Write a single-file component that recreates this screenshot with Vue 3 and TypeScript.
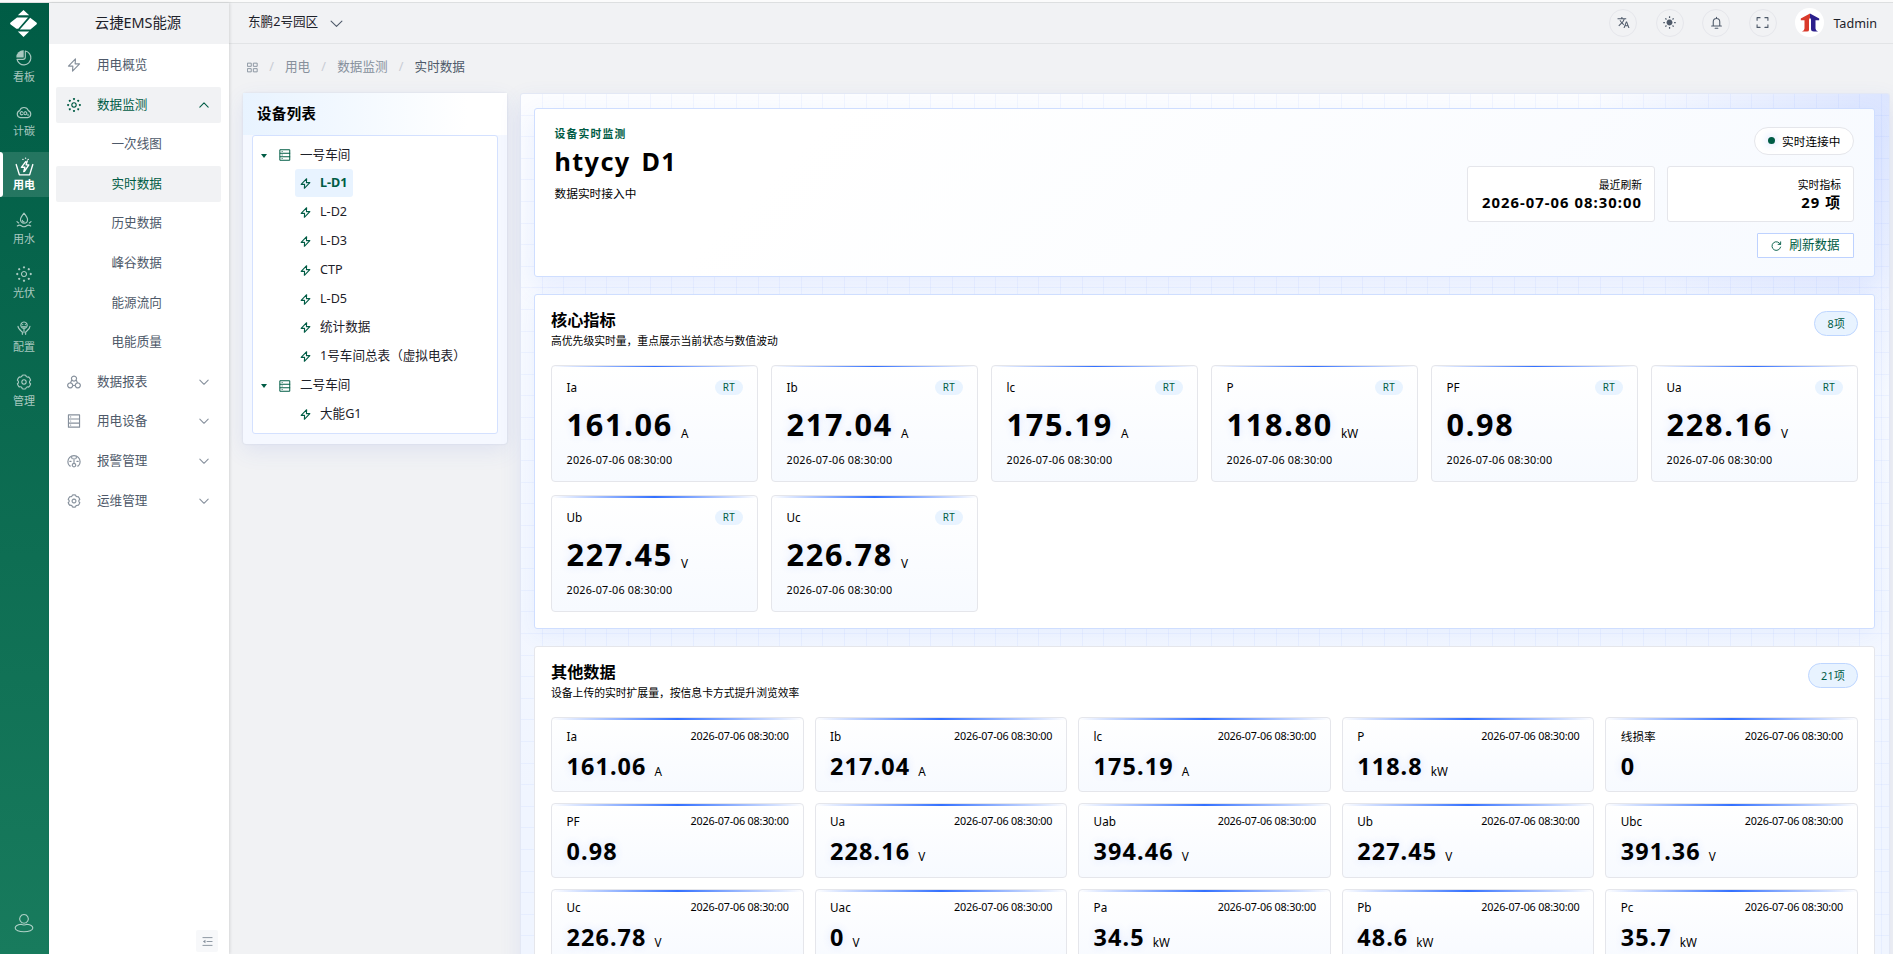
<script setup lang="ts">
interface Glyph { line?: string; fill?: string }
interface Metric { name: string; value: string; unit?: string }
interface MenuRow { label: string; icon?: string; arrow?: 'up' | 'down'; active?: boolean; open?: boolean }
interface TreeRow { label: string; group?: boolean; active?: boolean }

const glyphs: Record<string, Glyph> = {
  board: { line: 'M14 1.500A10.500 10.500 0 1 1 1.500 14H10.500a3.500 3.500 0 0 0 3.500-3.500z', fill: 'M11.500 .5v10.700H.5A10.500 10.500 0 0 1 11.500 .5z' },
  carbon: { line: 'M6.500 20.500a5.500 5.500 0 0 1-1-10.600 6.900 6.900 0 0 1 13 0 5.500 5.500 0 0 1-1 10.600zM10 12.200a2.200 2.200 0 1 0 0 3.300M14 11.700a2.200 2.200 0 1 0 .01 0M18 15.500v1.600' },
  power: { line: 'M1.500 9.500l4 13h13l4-13M13.500 6L8 13h4.500L11 18.500M15.500 5L14 10h3.500l-5.500 8M10 3h.1M13.300 1.500h.1M16.600 3h.1' },
  water: { line: 'M12 1.800c3 3.800 5.300 6.600 5.300 9.700a5.300 5.300 0 0 1-10.600 0C6.700 8.400 9 5.600 12 1.800zM9.500 12.500a2.600 2.600 0 0 0 2.500 2.300M1.500 14.500l2.500 2M22.500 14.500L20 16.500M2 21c2.300-1.800 4.400-1.800 6.500 0 2.300 1.600 4.500 1.600 7 0 1.900-1.800 4.200-1.800 6.500 0' },
  solar: { line: 'M12 8.200a3.800 3.800 0 1 0 .01 0z', fill: 'M12 .2a1.700 1.700 0 1 0 .01 0zM12 20.400a1.700 1.700 0 1 0 .01 0zM1.900 10.300a1.700 1.700 0 1 0 .01 0zM22.100 10.300a1.700 1.700 0 1 0 .01 0zM4.800 3.100a1.700 1.700 0 1 0 .01 0zM19.200 3.100a1.700 1.700 0 1 0 .01 0zM4.800 17.500a1.700 1.700 0 1 0 .01 0zM19.200 17.500a1.700 1.700 0 1 0 .01 0z' },
  config: { line: 'M12 3a4.800 4.800 0 1 0 .01 0zM10 6.800h.1M14 6.800h.1M10 9.500q2 1.500 4 0M3 9.500c0 4 3.500 6 6.500 8.500v3.500M21 9.500c0 4-3.500 6-6.500 8.500v3.500M12 13v6' },
  gear: { line: 'M9.300 1.800a10.500 10.500 0 0 1 5.400 0 3 3 0 0 0 4.400 2.600 10.500 10.500 0 0 1 2.800 4.900 3 3 0 0 0 0 5.400 10.500 10.500 0 0 1-2.900 4.900 3 3 0 0 0-4.400 2.600 10.500 10.500 0 0 1-5.300 0 3 3 0 0 0-4.400-2.700 10.500 10.500 0 0 1-2.800-4.800 3 3 0 0 0 0-5.400 10.500 10.500 0 0 1 2.900-4.900 3 3 0 0 0 4.300-2.600zM12 8.700a3.300 3.300 0 1 0 .01 0z' },
  bolt: { line: 'M14.500 1.500L2.500 14h7.500L9.500 22.500 21.500 10h-7.500z' },
  report: { line: 'M12 1.800a4.300 4.300 0 1 0 .01 0zM5.500 13.500a4.300 4.300 0 1 0 .01 0zM18.500 13.500a4.300 4.300 0 1 0 .01 0zM8.200 8.500L6.300 13M15.800 8.500l1.900 4.500M10.500 18h3' },
  device: { line: 'M2.500 1.500h19v21h-19zM2.500 8.500h19M2.500 15.500h19M6.200 5h.1M6.200 12h.1M6.200 19h.1' },
  alarm: { line: 'M6 20.500H4.500a10.500 10.500 0 1 1 15 0H18M12 7.500v8M12 16a3 3 0 1 0 .01 0M4.800 12.500h2.200M17 12.500h2.200M8 6l1 2M16 6l-1 2' },
  user: { line: 'M12 1.800a5.200 5.200 0 1 0 .01 0zM8.500 13.400C4.200 14 1.400 15.800 1.400 18c0 2.600 4.700 4.500 10.600 4.500s10.600-1.900 10.600-4.500c0-2.200-2.800-4-7.100-4.600-2.300 1.200-4.700 1.200-7 0z' },
  down: { line: 'M2 7.500l10 10 10-10' },
  up: { line: 'M2 17l10-10 10 10' },
  grid: { line: 'M1.800 2.500h7.500v7h-7.500zM14.700 2.500h7.500v7h-7.500zM1.800 14.500h7.500v7h-7.500zM14.700 14.500h7.500v7h-7.500z' },
  refresh: { line: 'M21 4v5.500h-5.500M20.500 9.500a9.500 9.500 0 1 0 .5 6' },
  bell: { line: 'M3 18.500h18M6 18.500v-8a6 6 0 0 1 12 0v8M12 4.500V2.500M9.500 22.500h5' },
  full: { line: 'M7.500 3H2v5M16.500 3H22v5M7.500 21H2v-5M16.500 21H22v-5' },
  lang: { fill: 'M12.870 15.070l-2.540-2.510.03-.03A17.520 17.520 0 0 0 14.070 6H17V4h-7V2H8v2H1v2h11.170C11.500 7.920 10.440 9.750 9 11.350 8.070 10.320 7.300 9.190 6.690 8h-2c.73 1.630 1.730 3.170 2.980 4.560l-5.090 5.020L4 19l5-5 3.110 3.110.76-2.040zM18.500 10h-2L12 22h2l1.120-3h4.750L21 22h2l-4.500-12zm-2.620 7l1.620-4.330L19.120 17h-3.240z' },
  sun: { fill: 'M12 6.500a5.500 5.500 0 1 0 .01 0zM11 .5h2.200v3H11zM11 20.500h2.200v3H11zM.5 11h3v2.200h-3zM20.500 11h3v2.200h-3zM3.600 5.200l1.600-1.600 2 2-1.600 1.600zM16.800 18.400l1.600-1.600 2 2-1.600 1.600zM3.600 18.800l2-2 1.600 1.600-2 2zM16.800 5.600l2-2 1.600 1.600-2 2z' },
  fold: { line: 'M2 3.500h20M11 12h11M2 20.500h20', fill: 'M7.500 8v8L2 12z' },
}

const rail = [
  { label: '看板', icon: 'board' },
  { label: '计碳', icon: 'carbon' },
  { label: '用电', icon: 'power', active: true },
  { label: '用水', icon: 'water' },
  { label: '光伏', icon: 'solar' },
  { label: '配置', icon: 'config' },
  { label: '管理', icon: 'gear' },
]

const menu: MenuRow[] = [
  { label: '用电概览', icon: 'bolt' },
  { label: '数据监测', icon: 'solar', arrow: 'up', open: true },
  { label: '一次线图' },
  { label: '实时数据', active: true },
  { label: '历史数据' },
  { label: '峰谷数据' },
  { label: '能源流向' },
  { label: '电能质量' },
  { label: '数据报表', icon: 'report', arrow: 'down' },
  { label: '用电设备', icon: 'device', arrow: 'down' },
  { label: '报警管理', icon: 'alarm', arrow: 'down' },
  { label: '运维管理', icon: 'gear', arrow: 'down' },
]

const tree: TreeRow[] = [
  { label: '一号车间', group: true },
  { label: 'L-D1', active: true },
  { label: 'L-D2' },
  { label: 'L-D3' },
  { label: 'CTP' },
  { label: 'L-D5' },
  { label: '统计数据' },
  { label: '1号车间总表（虚拟电表）' },
  { label: '二号车间', group: true },
  { label: '大能G1' },
]

const stamp = '2026-07-06 08:30:00'
const crumbs = ['用电', '数据监测', '实时数据']
const tools = ['lang', 'sun', 'bell', 'full']

const core: Metric[] = [
  { name: 'Ia', value: '161.06', unit: 'A' },
  { name: 'Ib', value: '217.04', unit: 'A' },
  { name: 'lc', value: '175.19', unit: 'A' },
  { name: 'P', value: '118.80', unit: 'kW' },
  { name: 'PF', value: '0.98' },
  { name: 'Ua', value: '228.16', unit: 'V' },
  { name: 'Ub', value: '227.45', unit: 'V' },
  { name: 'Uc', value: '226.78', unit: 'V' },
]

const others: Metric[] = [
  { name: 'Ia', value: '161.06', unit: 'A' },
  { name: 'Ib', value: '217.04', unit: 'A' },
  { name: 'lc', value: '175.19', unit: 'A' },
  { name: 'P', value: '118.8', unit: 'kW' },
  { name: '线损率', value: '0' },
  { name: 'PF', value: '0.98' },
  { name: 'Ua', value: '228.16', unit: 'V' },
  { name: 'Uab', value: '394.46', unit: 'V' },
  { name: 'Ub', value: '227.45', unit: 'V' },
  { name: 'Ubc', value: '391.36', unit: 'V' },
  { name: 'Uc', value: '226.78', unit: 'V' },
  { name: 'Uac', value: '0', unit: 'V' },
  { name: 'Pa', value: '34.5', unit: 'kW' },
  { name: 'Pb', value: '48.6', unit: 'kW' },
  { name: 'Pc', value: '35.7', unit: 'kW' },
]
</script>

<template>
  <div class="app">
    <nav class="rail">
      <svg class="logo" viewBox="0 0 27 27">
        <path d="M13.500 0L19.200 5.300H7.800zM13.500 27L7.800 21.400h11.400z" />
        <path d="M7 7.500h11L8.300 18.700H6.400L.6 14.400Q-.4 13.500.6 12.600zM20.200 7.700l6.200 4.900q1 .9 0 1.800l-6 5.200H9.800z" />
      </svg>
      <div class="rail-list">
        <div v-for="r in rail" :key="r.label" class="rail-item" :class="{ on: r.active }">
          <svg class="ico rail-ico" viewBox="0 0 24 24">
            <path v-if="glyphs[r.icon].line" class="ln" :d="glyphs[r.icon].line" />
            <path v-if="glyphs[r.icon].fill" class="fl" :d="glyphs[r.icon].fill" />
          </svg>
          <span>{{ r.label }}</span>
        </div>
      </div>
      <svg class="ico rail-user" viewBox="0 0 24 24"><path class="ln" :d="glyphs.user.line" /></svg>
    </nav>

    <aside class="side">
      <div class="brand">云捷EMS能源</div>
      <div class="menu">
        <div
          v-for="m in menu"
          :key="m.label"
          class="menu-row"
          :class="{ sub: !m.icon, on: m.active || m.open }"
        >
          <svg v-if="m.icon" class="ico menu-ico" viewBox="0 0 24 24">
            <path v-if="glyphs[m.icon].line" class="ln" :d="glyphs[m.icon].line" />
            <path v-if="glyphs[m.icon].fill" class="fl" :d="glyphs[m.icon].fill" />
          </svg>
          <span class="menu-label">{{ m.label }}</span>
          <svg v-if="m.arrow" class="ico arrow" viewBox="0 0 24 24"><path class="ln" :d="glyphs[m.arrow].line" /></svg>
        </div>
      </div>
      <div class="fold">
        <svg class="ico" viewBox="0 0 24 24">
          <path class="ln" :d="glyphs.fold.line" /><path class="fl" :d="glyphs.fold.fill" />
        </svg>
      </div>
    </aside>

    <div class="page">
      <header class="top">
        <span class="park">东鹏2号园区</span>
        <svg class="ico park-arrow" viewBox="0 0 24 24"><path class="ln" :d="glyphs.down.line" /></svg>
        <div class="tools">
          <span v-for="t in tools" :key="t" class="tool">
            <svg class="ico" viewBox="0 0 24 24">
              <path v-if="glyphs[t].line" class="ln" :d="glyphs[t].line" />
              <path v-if="glyphs[t].fill" class="fl" :d="glyphs[t].fill" />
            </svg>
          </span>
          <span class="avatar">
            <svg viewBox="0 0 20 20">
              <path class="red" d="M10 .5v4.300L9 6.500V17q0 1.500-2 1.500H2q2.500-1 2.500-3V7.200H.8V5.500z" />
              <path class="blue" d="M10 .5l9.200 5v1.700h-3.700v8.300q0 2 2.500 3h-4q-3 0-3-2.500V6.500L10 4.800z" />
            </svg>
          </span>
          <span class="user">Tadmin</span>
        </div>
      </header>

      <div class="crumbs">
        <svg class="ico" viewBox="0 0 24 24"><path class="ln" :d="glyphs.grid.line" /></svg>
        <template v-for="(c, i) in crumbs" :key="c">
          <i>/</i><span :class="{ last: i === crumbs.length - 1 }">{{ c }}</span>
        </template>
      </div>

      <div class="body">
        <section class="devices">
          <h3>设备列表</h3>
          <div class="tree">
            <div v-for="t in tree" :key="t.label" class="node" :class="{ group: t.group, on: t.active }">
              <i v-if="t.group" class="caret" />
              <span class="node-box">
                <svg class="ico" viewBox="0 0 24 24">
                  <path class="ln" :d="t.group ? glyphs.device.line : glyphs.bolt.line" />
                </svg>
                <span>{{ t.label }}</span>
              </span>
            </div>
          </div>
        </section>

        <main class="board">
          <section class="hero">
            <div class="hero-left">
              <p class="eyebrow">设备实时监测</p>
              <h1>htycy D1</h1>
              <p class="desc">数据实时接入中</p>
            </div>
            <div class="hero-right">
              <span class="live"><i />实时连接中</span>
              <div class="stats">
                <div class="stat"><small>最近刷新</small><strong>{{ stamp }}</strong></div>
                <div class="stat"><small>实时指标</small><strong>29 项</strong></div>
              </div>
              <button class="reload">
                <svg class="ico" viewBox="0 0 24 24"><path class="ln" :d="glyphs.refresh.line" /></svg>刷新数据
              </button>
            </div>
          </section>

          <section class="panel blue-edge">
            <div class="panel-head">
              <div>
                <h2>核心指标</h2>
                <p>高优先级实时量，重点展示当前状态与数值波动</p>
              </div>
              <span class="count">8项</span>
            </div>
            <div class="core-grid">
              <article v-for="(m, i) in core" :key="m.name" class="card core" :class="{ thin: i < 6 }">
                <div class="card-top"><span class="name">{{ m.name }}</span><span class="rt">RT</span></div>
                <div class="value"><b>{{ m.value }}</b><em v-if="m.unit">{{ m.unit }}</em></div>
                <time>{{ stamp }}</time>
              </article>
            </div>
          </section>

          <section class="panel">
            <div class="panel-head">
              <div>
                <h2>其他数据</h2>
                <p>设备上传的实时扩展量，按信息卡方式提升浏览效率</p>
              </div>
              <span class="count">21项</span>
            </div>
            <div class="other-grid">
              <article v-for="m in others" :key="m.name" class="card other">
                <div class="card-top"><span class="name">{{ m.name }}</span><time>{{ stamp }}</time></div>
                <div class="value"><b>{{ m.value }}</b><em v-if="m.unit">{{ m.unit }}</em></div>
              </article>
            </div>
          </section>
        </main>
      </div>
    </div>
  </div>
</template>

<style>
html,
body {
  margin: 0;
  overflow: hidden;
  background: #fff;
}
</style>

<style scoped>
* {
  box-sizing: border-box;
}
h1,
h2,
h3,
p {
  margin: 0;
}
i,
em {
  font-style: normal;
}
.app {
  display: flex;
  height: 954px;
  padding-top: 3px;
  overflow: hidden;
  background: linear-gradient(#fbfbfb 0, #fbfbfb 2px, #dddfe0 2px, #dddfe0 3px, #f1f2f4 3px);
  font-family: "Noto Sans", "Noto Sans CJK SC", sans-serif;
  font-size: 12.6px;
  line-height: 18px;
  color: #1d2129;
}
.ico {
  display: block;
  flex: none;
}
.ln {
  fill: none;
  stroke: currentColor;
  stroke-width: 2;
  stroke-linecap: round;
  stroke-linejoin: round;
}
.fl {
  fill: currentColor;
}

/* green rail */
.rail {
  width: 49px;
  flex: none;
  display: flex;
  flex-direction: column;
  background: linear-gradient(#005c45, #187b5d);
  color: rgba(255, 255, 255, 0.66);
}
.logo {
  width: 27px;
  height: 27px;
  margin: 7px 0 0 10px;
  fill: #fff;
}
.rail-list {
  display: flex;
  flex-direction: column;
  gap: 9px;
  margin-top: 7px;
}
.rail-item {
  height: 45px;
  padding-top: 6px;
  display: flex;
  flex-direction: column;
  align-items: center;
  font-size: 11px;
  line-height: 16px;
}
.rail-item span {
  margin: 3px 1px 0 0;
}
.rail-item.on {
  padding-top: 5px;
  color: #fff;
  font-weight: 700;
  background: rgba(255, 255, 255, 0.13);
  position: relative;
}
.rail-item.on::before {
  content: "";
  position: absolute;
  left: 0;
  top: 0;
  width: 3px;
  height: 45px;
  border-radius: 0 3px 3px 0;
  background: #fff;
}
.rail-ico {
  width: 16px;
  height: 16px;
  margin-right: 1px;
}
.rail-item.on .rail-ico {
  width: 19px;
  height: 19px;
  margin-bottom: -2px;
}
.rail-ico .ln {
  stroke-width: 1.7;
}
.rail-user {
  width: 20px;
  height: 20px;
  margin: auto 0 21px 14px;
}
.rail-user .ln {
  stroke-width: 1.3;
}

/* menu */
.side {
  width: 180px;
  flex: none;
  display: flex;
  flex-direction: column;
  background: #fff;
  color: #4e5969;
  box-shadow: 1px 0 3px rgba(0, 0, 0, 0.12);
  z-index: 1;
}
.brand {
  height: 41px;
  padding-right: 2px;
  background: #f1f2f4;
  color: #1d2129;
  font-size: 14.4px;
  line-height: 40px;
  text-align: center;
}
.menu {
  display: flex;
  flex-direction: column;
  gap: 3.6px;
  padding: 3px 8px 0 7px;
}
.menu-row {
  height: 36px;
  display: flex;
  align-items: center;
  padding: 0 12px 0 11px;
  border-radius: 2px;
}
.menu-row.sub {
  padding-left: 55.5px;
}
.menu-row.on {
  background: #f1f2f4;
  color: #005c45;
}
.menu-ico {
  width: 14px;
  height: 14px;
  margin-right: 16px;
  color: #86909c;
}
.on .menu-ico {
  color: #005c45;
}
.menu-label {
  flex: 1;
}
.arrow {
  width: 10px;
  height: 10px;
  color: #86909c;
}
.arrow .ln {
  stroke-width: 2.6;
}
.on .arrow {
  color: #005c45;
}
.fold {
  width: 22px;
  height: 22px;
  margin: auto 11px 2px auto;
  display: grid;
  place-items: center;
  background: #f7f8fa;
  border-radius: 2px;
  color: #86909c;
}
.fold .ico {
  width: 11px;
  height: 11px;
}

/* top bar */
.page {
  flex: 1;
  min-width: 0;
  display: flex;
  flex-direction: column;
}
.top {
  height: 41px;
  flex: none;
  display: flex;
  align-items: center;
  padding: 0 16px 1px 19px;
  border-bottom: 1px solid #e2e4e6;
}
.park {
  margin-top: -1px;
}
.park-arrow {
  width: 13px;
  height: 13px;
  margin-left: 12px;
  margin-top: 1px;
  color: #4e5969;
}
.tools {
  margin-left: auto;
  display: flex;
  align-items: center;
}
.tool {
  width: 28px;
  height: 28px;
  margin: 0 18.6px 0 0;
  display: grid;
  place-items: center;
  border: 1px solid #e5e6eb;
  border-radius: 50%;
  color: #4e5969;
}
.tool .ico {
  width: 13px;
  height: 13px;
}
.avatar {
  width: 29px;
  height: 29px;
  border-radius: 50%;
  background: #fff;
  display: grid;
  place-items: center;
}
.avatar svg {
  width: 20px;
  height: 20px;
}
.red {
  fill: #d93a2b;
}
.blue {
  fill: #2b1f8c;
}
.user {
  margin: 2px 0 0 9px;
}

.crumbs {
  height: 48px;
  flex: none;
  display: flex;
  align-items: center;
  padding: 0 0 2px 18px;
  color: #86909c;
}
.crumbs .ico {
  width: 11px;
  height: 11px;
}
.crumbs i {
  width: 27px;
  text-align: center;
  color: #c9cdd4;
}
.crumbs .last {
  color: #4e5969;
}

.body {
  flex: 1;
  min-height: 0;
  display: flex;
  align-items: flex-start;
  gap: 13px;
  padding: 0.5px 3px 0 14px;
}

/* device tree */
.devices {
  width: 264px;
  height: 351px;
  flex: none;
  border-radius: 3px;
  background: #f5f8ff;
  box-shadow: 0 7px 22px rgba(64, 100, 220, 0.1), 0 0 2px rgba(60, 80, 140, 0.16);
}
.devices h3 {
  height: 42px;
  padding-left: 14px;
  font-size: 14.4px;
  line-height: 41px;
  letter-spacing: 0.45px;
  color: #000;
  background: linear-gradient(90deg, #e8f3ff, #fff 85%);
}
.tree {
  height: 299px;
  margin: 0 9px;
  padding: 4.8px 8px;
  background: #fff;
  border: 1px solid #d4e1ff;
  border-radius: 3px;
}
.node {
  height: 28.8px;
  display: flex;
  align-items: center;
  padding-left: 34px;
}
.node.group {
  padding-left: 0;
}
.caret {
  width: 0;
  height: 0;
  margin: 2px 5px 0 0;
  border: 3.5px solid transparent;
  border-top: 4.5px solid #005c45;
  border-bottom: 0;
}
.node-box {
  height: 28px;
  display: flex;
  align-items: center;
  padding: 0 5px;
  border-radius: 3px;
}
.node-box .ico {
  width: 11px;
  height: 11px;
  margin: 1px 9px 0 0;
  color: #005c45;
}
.group .node-box .ico {
  width: 12px;
  height: 12px;
  margin: 1px 9px 0 2px;
}
.on .node-box {
  background: #e8f3ff;
  color: #005c45;
  font-weight: 700;
}
.node-box .ln {
  stroke-width: 2.4;
}
.group .node-box .ln {
  stroke-width: 2;
}

/* monitoring board */
.board {
  width: 1370px;
  height: 1300px;
  flex: none;
  padding: 14.2px 14px 0 13px;
  border-radius: 3px;
  border: 1px solid #e3e8f5;
  border-width: 1px 1px 0;
  background:
    repeating-linear-gradient(90deg, transparent 0 20.6px, rgba(60, 110, 255, 0.055) 20.6px 21.6px),
    repeating-linear-gradient(transparent 0 20.6px, rgba(60, 110, 255, 0.055) 20.6px 21.6px),
    radial-gradient(circle at 100% 0, rgba(60, 110, 255, 0.17), transparent 300px),
    linear-gradient(#fcfdff, #f0f5ff 700px);
  box-shadow: 0 7px 22px rgba(64, 100, 220, 0.1);
}
.hero {
  height: 169px;
  display: flex;
  justify-content: space-between;
  padding: 18px 20px 0 19.5px;
  border: 1px solid #cfdeff;
  border-radius: 3px;
  background: linear-gradient(135deg, #fff 20%, #f7faff);
  box-shadow: 0 10px 26px rgba(60, 110, 255, 0.1);
  color: #000;
}
.eyebrow {
  margin-top: -2px;
  font-size: 10.8px;
  font-weight: 700;
  letter-spacing: 1.2px;
  line-height: 18px;
  color: #005c45;
}
h1 {
  font-size: 25.2px;
  line-height: 36px;
  letter-spacing: 1.4px;
  word-spacing: 3px;
}
.desc {
  margin-top: 5px;
  font-size: 11.7px;
  line-height: 18px;
}
.hero-right {
  width: 387px;
  display: flex;
  flex-direction: column;
  align-items: flex-end;
}
.live {
  width: 100px;
  height: 28px;
  display: flex;
  align-items: center;
  padding-left: 12.5px;
  border: 1px solid #e5e6eb;
  border-radius: 14px;
  background: #fff;
  font-size: 11.7px;
}
.live i {
  width: 7px;
  height: 7px;
  margin-right: 7.5px;
  border-radius: 50%;
  background: #005c45;
  box-shadow: 0 0 8px rgba(60, 110, 255, 0.35);
}
.stats {
  width: 100%;
  display: grid;
  grid-template-columns: 188px 187px;
  gap: 12px;
  margin-top: 11px;
}
.stat {
  height: 56px;
  padding: 9px 12px 0 0;
  border: 1px solid #e5e6eb;
  border-radius: 3px;
  background: #fff;
  text-align: right;
}
.stat small {
  display: block;
  font-size: 10.8px;
  line-height: 17px;
}
.stat strong {
  display: block;
  font-size: 14.8px;
  line-height: 18px;
  letter-spacing: 1.05px;
  white-space: nowrap;
}
.reload {
  width: 97px;
  height: 25px;
  margin-top: 11px;
  padding: 0;
  display: flex;
  align-items: center;
  justify-content: center;
  border: 1px solid #bed2ff;
  border-radius: 1px;
  background: #fff;
  color: #005c45;
  font: inherit;
}
.reload .ico {
  width: 11px;
  height: 11px;
  margin-right: 7px;
}
.panel {
  margin-top: 17px;
  padding: 16px 16px 16.5px;
  border: 1px solid #e5e6eb;
  border-radius: 3px;
  background: #fff;
  color: #000;
}
.blue-edge {
  border-color: #cfdeff;
  box-shadow: 0 6px 22px rgba(60, 110, 255, 0.07);
}
.panel-head {
  height: 54px;
  display: flex;
  justify-content: space-between;
}
h2 {
  font-size: 16.2px;
  line-height: 18px;
}
.panel-head p {
  font-size: 10.8px;
  line-height: 16px;
  margin-top: 4px;
}
.count {
  height: 25px;
  padding: 0 12px;
  border: 1px solid #bed6ff;
  border-radius: 13px;
  background: #e8f3ff;
  color: #005c45;
  font-size: 10.8px;
  line-height: 23px;
  letter-spacing: 0.3px;
}
.core-grid {
  display: grid;
  grid-template-columns: repeat(6, 1fr);
  gap: 13px;
}
.other-grid {
  display: grid;
  grid-template-columns: repeat(5, 1fr);
  gap: 10.8px;
}
.card {
  position: relative;
  padding: 14px 14px 0 14.5px;
  border: 1px solid #e5e6eb;
  border-radius: 4px;
  background: linear-gradient(#fff, #f7faff);
}
.card::before {
  content: "";
  position: absolute;
  left: 0;
  right: 0;
  top: 0;
  height: 2px;
  background: linear-gradient(90deg, transparent, #3370ff, transparent);
}
.card.thin::before {
  height: 1px;
}
.core {
  height: 117px;
}
.other {
  height: 75px;
  padding-top: 10px;
}
.card-top {
  height: 15px;
  display: flex;
  justify-content: space-between;
  align-items: center;
}
.name {
  font-size: 11.7px;
}
.rt {
  width: 28px;
  height: 15px;
  border-radius: 8px;
  background: #e8f3ff;
  color: #005c45;
  font-size: 9.9px;
  line-height: 15px;
  letter-spacing: 0.4px;
  text-align: center;
}
.value {
  display: flex;
  align-items: baseline;
}
.core .value {
  margin-top: 11.5px;
  height: 36px;
  line-height: 36px;
}
.value b {
  font-size: 30.6px;
  letter-spacing: 1.75px;
  text-shadow: 0 0 8px rgba(60, 110, 255, 0.16);
}
.value em {
  position: relative;
  top: 1.5px;
  margin-left: 8px;
  font-size: 11.7px;
}
time {
  font-size: 10.8px;
  line-height: 16px;
}
.core time {
  display: block;
  margin-top: 10px;
  letter-spacing: 0.2px;
}
.other .value {
  margin-top: 7.5px;
  height: 30px;
  line-height: 30px;
}
.other .value b {
  font-size: 23.4px;
  letter-spacing: 1.1px;
}
.other .value em {
  top: 1px;
}
.other time {
  letter-spacing: -0.2px;
}
</style>
